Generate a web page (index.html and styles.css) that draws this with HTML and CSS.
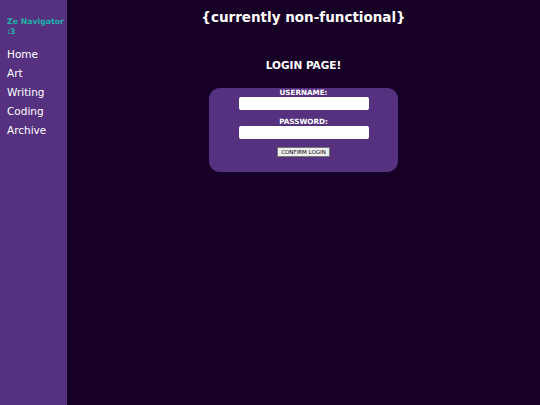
FILE: index.html
```html
<!DOCTYPE html>
<html>
<head>
<meta charset="utf-8">
<link rel="stylesheet" href="styles.css">
</head>
<body>
<div class="page">
  <nav class="sidebar">
    <div class="nav-title">Ze Navigator :3</div>
    <a class="nav-link" href="#">Home</a>
    <a class="nav-link" href="#">Art</a>
    <a class="nav-link" href="#">Writing</a>
    <a class="nav-link" href="#">Coding</a>
    <a class="nav-link" href="#">Archive</a>
  </nav>
  <main class="content">
    <h1 class="title">{currently non-functional}</h1>
    <h2 class="subtitle">LOGIN PAGE!</h2>
    <form class="login-box">
      <label class="field-label">USERNAME:</label>
      <input class="field-input" type="text">
      <label class="field-label second">PASSWORD:</label>
      <input class="field-input" type="password">
      <button class="confirm" type="button">CONFIRM LOGIN</button>
    </form>
  </main>
</div>
</body>
</html>
```

FILE: styles.css
```css
html, body {
  margin: 0;
  padding: 0;
  height: 100%;
}
body {
  background: #170025;
  font-family: "DejaVu Sans", Verdana, sans-serif;
  color: #ffffff;
}
.page {
  display: flex;
  min-height: 100%;
}
.sidebar {
  width: 67px;
  flex: none;
  background: #55317f;
  display: flex;
  flex-direction: column;
  padding: 17px 0 0 7px;
  box-sizing: border-box;
}
.nav-title {
  color: #1fb0a8;
  font-weight: bold;
  font-size: 7.8px;
  line-height: 10px;
  width: 60px;
  margin-bottom: 8px;
}
.nav-link {
  color: #ffffff;
  text-decoration: none;
  font-size: 10.5px;
  line-height: 19px;
}
.content {
  flex: 1;
  display: flex;
  flex-direction: column;
  align-items: center;
}
.title {
  margin: 9px 0 0;
  font-size: 13.5px;
  line-height: 17px;
  font-weight: bold;
}
.subtitle {
  margin: 33px 0 0;
  font-size: 10.5px;
  line-height: 13px;
  font-weight: bold;
}
.login-box {
  margin-top: 16px;
  width: 189px;
  height: 84px;
  box-sizing: border-box;
  background: #55317f;
  border-radius: 11px;
  display: flex;
  flex-direction: column;
  align-items: center;
  padding-top: 1px;
}
.field-label {
  font-size: 7.2px;
  line-height: 7px;
  font-weight: bold;
  color: #ffffff;
}
.field-label.second {
  margin-top: 8px;
}
.field-input {
  width: 130px;
  height: 13px;
  box-sizing: border-box;
  border: none;
  border-radius: 2px;
  background: #ffffff;
  margin: 1px 0 0;
  padding: 0;
}
.confirm {
  margin-top: 8px;
  font-family: "DejaVu Sans", sans-serif;
  font-size: 5.5px;
  line-height: 6px;
  padding: 1px 3px;
  background: #efefef;
  color: #000000;
  border: 1px solid #767676;
  border-radius: 1px;
}
```
